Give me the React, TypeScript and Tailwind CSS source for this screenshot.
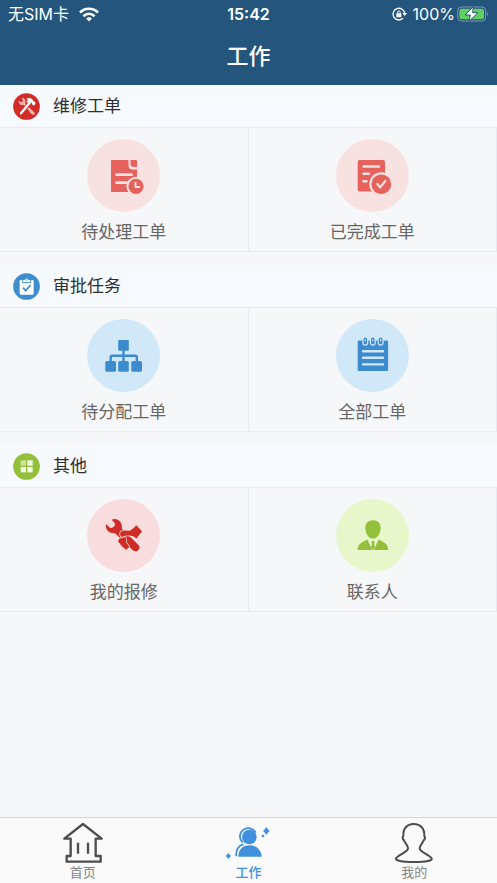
import type { ReactNode } from 'react';

interface Entry {
    label: string;
    circle: string;
    icon: ReactNode;
}

interface Section {
    title: string;
    badge: ReactNode;
    entries: Entry[];
}

function RepairBadge() {
    return (
        <svg viewBox="0 0 81 81" className="size-[27px]" aria-hidden="true">
            <circle cx="40.5" cy="40.5" r="40" fill="#d12c27" />
            <path d="M30 29 L58 59" stroke="#f3b5b3" strokeWidth="7" />
            <path d="M51 54 l5 -4 l9 9 l-1 6 l-6 0 l-8 -8 z" fill="#f3b5b3" />
            <path d="M17 23 l8 5 l5 -5 l-4 -8 c7 -1 13 4 11 13 l-7 8 c-8 2 -14 -5 -13 -13 z" fill="#f3b5b3" />
            <path d="M52 27 L24 63" stroke="#d12c27" strokeWidth="12" />
            <path d="M52 27 L24 61" stroke="#fff" strokeWidth="7" strokeLinecap="round" />
            <path d="M40 17 c8 -4 15 -2 20 4 l3 5 l4 1 l0 6 l-5 5 l-6 -5 l1 -4 l-5 -5 l-5 7 l-7 -5 l5 -6 z" fill="#fff" />
        </svg>
    );
}

function ApprovalBadge() {
    return (
        <svg viewBox="0 0 81 81" className="size-[27px]" aria-hidden="true">
            <circle cx="40.5" cy="40.5" r="40" fill="#3e8dce" />
            <rect x="20" y="21" width="42" height="44" rx="4" fill="#fff" />
            <path d="M29 20 v9 h24 v-9" fill="none" stroke="#3e8dce" strokeWidth="3" />
            <path d="M31 26 v-5 h5 c1 -6 9 -6 10 0 h5 v5 z" fill="#fff" />
            <circle cx="41" cy="21" r="2" fill="#3e8dce" />
            <path d="M30 44 L38 53 L53 36" fill="none" stroke="#3e8dce" strokeWidth="5" />
        </svg>
    );
}

function OtherBadge() {
    return (
        <svg viewBox="0 0 81 81" className="size-[27px]" aria-hidden="true">
            <circle cx="40.5" cy="40.5" r="40" fill="#93bf3a" />
            <rect x="23" y="22" width="16" height="16" fill="#cfe39f" />
            <rect x="43" y="22" width="16" height="16" fill="#f4faea" />
            <rect x="23" y="42" width="16" height="16" fill="#f4faea" />
            <rect x="43" y="42" width="16" height="16" fill="#f4faea" />
        </svg>
    );
}

function PendingIcon() {
    return (
        <svg viewBox="0 0 73 73" className="size-full" aria-hidden="true">
            <path d="M25 21 H41.5 V26 Q41.5 30.5 46 30.5 H50 V53 H25 Q24 53 24 52 V22 Q24 21 25 21 Z" fill="#e5625d" />
            <path d="M43.5 21 H49 Q50 21 50 22 V28 H47 Q43.5 28 43.5 24.5 Z" fill="#e5625d" />
            <path d="M29.5 35.7 H44.5 M29.5 43.7 H40" stroke="#f8e1e1" strokeWidth="2.8" strokeLinecap="round" />
            <circle cx="49" cy="47.3" r="9.6" fill="#f8e1e1" />
            <circle cx="49" cy="47.3" r="7.6" fill="#e5625d" />
            <path d="M48.5 43 V48 H53" fill="none" stroke="#f8e1e1" strokeWidth="1.9" />
        </svg>
    );
}

function DoneIcon() {
    return (
        <svg viewBox="0 0 73 73" className="size-full" aria-hidden="true">
            <rect x="21.7" y="21" width="27.3" height="31.5" rx="2" fill="#e5625d" />
            <path d="M27.5 27.5 H43 M27.5 34.8 H33 M27.5 42.3 H30.5" stroke="#f8e1e1" strokeWidth="2.4" strokeLinecap="round" />
            <circle cx="45.3" cy="45.3" r="12" fill="#f8e1e1" />
            <circle cx="45.3" cy="45.3" r="9.9" fill="#e5625d" />
            <path d="M41.3 45 L44.2 48.3 L49.3 42" fill="none" stroke="#f8e1e1" strokeWidth="2.2" strokeLinecap="round" strokeLinejoin="round" />
        </svg>
    );
}

function AssignIcon() {
    return (
        <svg viewBox="0 0 73 73" className="size-full" aria-hidden="true">
            <path d="M36.5 30 V43 M23.7 43 V38 Q23.7 36.7 25 36.7 H48.5 Q49.8 36.7 49.8 38 V43" fill="none" stroke="#3d8bcf" strokeWidth="2.4" />
            <g fill="#3d8bcf">
                <rect x="31.2" y="21" width="10.6" height="10.7" rx="1" />
                <rect x="18.3" y="42" width="10.7" height="10.7" rx="1.5" />
                <rect x="31.2" y="42" width="10.6" height="10.7" rx="1.5" />
                <rect x="44.3" y="42" width="10.7" height="10.7" rx="1.5" />
            </g>
        </svg>
    );
}

function AllIcon() {
    return (
        <svg viewBox="0 0 73 73" className="size-full" aria-hidden="true">
            <rect x="21.7" y="21.6" width="30.4" height="30.5" rx="1" fill="#3d8bcf" />
            {[29.3, 36.8, 44.6].map((x) => (
                <g key={x}>
                    <rect x={x - 3} y="17.6" width="6" height="9.2" rx="3" fill="#d0e8f8" />
                    <rect x={x - 1.8} y="18.6" width="3.6" height="7" rx="1.8" fill="#3d8bcf" />
                    <rect x={x - 0.6} y="20" width="1.2" height="2.6" rx="0.6" fill="#d0e8f8" />
                </g>
            ))}
            <path d="M27 32.3 H47 M27 38.8 H47 M27 45.4 H47" stroke="#d0e8f8" strokeWidth="2.4" strokeLinecap="round" />
        </svg>
    );
}

function MyRepairIcon() {
    return (
        <svg viewBox="0 0 73 73" className="size-full" aria-hidden="true">
            <path d="M24.5 20.8 C30 18 36 23 34.8 29.6 L52 46.5 Q53.4 50 50.6 51.8 Q47.8 53.2 45.3 50.8 L28 34.2 C22 34.8 17.8 30.5 19 25 L22.3 28.2 Q24.6 29.8 26.8 27.8 Q28.8 25.6 27.4 23.6 Z" fill="#d02c26" />
            <path d="M33 35 Q33.5 31.6 37 31.6 L43 31.8 Q45 30 46.5 29.3 L49.3 26.3 L55 32.2 L49.6 39.4 Q46.5 36.6 42.5 36.6 Q38.5 36 36.5 37.6 Q33.5 39 33 35 Z" fill="#d02c26" stroke="#f9dcde" strokeWidth="1.6" paintOrder="stroke" />
            <path d="M32.4 39.4 Q35 39.8 37.3 38 Q40.4 39.8 39 43.4 L42 47 Q42.4 48.8 40.6 49.2 Q40 51 38.2 50.2 L37 48.8 Q35.2 49 35 46.8 Q33 46.6 33.2 44.6 Q30.6 43.8 31.4 41.6 Z" fill="#d02c26" stroke="#f9dcde" strokeWidth="1.4" paintOrder="stroke" />
        </svg>
    );
}

function ContactIcon() {
    return (
        <svg viewBox="0 0 73 73" className="size-full" aria-hidden="true">
            <g fill="#93bf3a">
                <path d="M37 21.3 C42.5 21.3 45.2 24.8 44.6 30 C44 35.5 41 39.7 37 39.7 C33 39.7 30 35.5 29.4 30 C28.8 24.8 31.5 21.3 37 21.3 Z" />
                <path d="M31.5 40.5 L36 51 H21.7 C21.7 45 25.5 43.5 31.5 40.5 Z" />
                <path d="M42.5 40.5 L38 51 H52.1 C52.1 45 48.5 43.5 42.5 40.5 Z" />
                <path d="M35.3 42 H38.7 L38 44.5 L39 48.5 L37 51 L35 48.5 L36 44.5 Z" />
            </g>
        </svg>
    );
}

const sections: Section[] = [
    {
        title: '维修工单',
        badge: <RepairBadge />,
        entries: [
            { label: '待处理工单', circle: 'bg-[#f8e1e1]', icon: <PendingIcon /> },
            { label: '已完成工单', circle: 'bg-[#f8e1e1]', icon: <DoneIcon /> },
        ],
    },
    {
        title: '审批任务',
        badge: <ApprovalBadge />,
        entries: [
            { label: '待分配工单', circle: 'bg-[#d0e8f8]', icon: <AssignIcon /> },
            { label: '全部工单', circle: 'bg-[#d0e8f8]', icon: <AllIcon /> },
        ],
    },
    {
        title: '其他',
        badge: <OtherBadge />,
        entries: [
            { label: '我的报修', circle: 'bg-[#f9dcde]', icon: <MyRepairIcon /> },
            { label: '联系人', circle: 'bg-[#e8f7cb]', icon: <ContactIcon /> },
        ],
    },
];

function StatusBar() {
    return (
        <div className="grid h-7 grid-cols-3 items-center px-2 text-base leading-7">
            <div className="flex items-center gap-2.5">
                <span>无SIM卡</span>
                <svg viewBox="0 0 60 44" className="h-[15px] w-5" aria-hidden="true">
                    <g fill="none" stroke="#fff" strokeWidth="8">
                        <path d="M3 16 C18 1 42 1 57 16" />
                        <path d="M13 27 C23 18 37 18 47 27" />
                    </g>
                    <path d="M21 34 Q30 27 39 34 L30 43 Z" fill="#fff" />
                </svg>
            </div>
            <span className="text-center font-semibold">15:42</span>
            <div className="flex items-center justify-end">
                <svg viewBox="0 0 45 42" className="mr-1.5 h-[14px] w-[15px]" aria-hidden="true">
                    <path d="M33 34 A17.5 17.5 0 1 1 38 18" fill="none" stroke="#fff" strokeWidth="4" />
                    <path d="M31 18 H45 L38 27 Z" fill="#fff" />
                    <rect x="13" y="19" width="15" height="12" rx="1" fill="#fff" />
                    <path d="M16.5 20 V16 Q16.5 12 20.5 12 Q24.5 12 24.5 16 V20" fill="none" stroke="#fff" strokeWidth="3" />
                </svg>
                <span className="mr-0.5">100%</span>
                <svg viewBox="0 0 96 48" className="h-4 w-8" aria-hidden="true">
                    <rect x="2" y="3" width="84" height="42" rx="11" fill="none" stroke="#7d9bb4" strokeWidth="3" />
                    <rect x="7" y="8" width="74" height="32" rx="7" fill="#62cf62" />
                    <path d="M90 17 Q96 24 90 31 Z" fill="#7d9bb4" />
                    <path d="M49 2 L24 27 H40 L36 46 L63 20 H47 Z" fill="#fff" stroke="#24557d" strokeWidth="3" />
                </svg>
            </div>
        </div>
    );
}

function HomeTabIcon() {
    return (
        <svg viewBox="0 0 120 123" className="h-[41px] w-10" fill="none" stroke="#4d4d4d" strokeWidth="7" strokeLinejoin="round" aria-hidden="true">
            <path d="M60 6 L116 50 H98 V102 H113 V119 H11 V102 H23 V50 H4 Z" />
            <path d="M45 62 V95 M75 62 V95" />
        </svg>
    );
}

function WorkTabIcon() {
    return (
        <svg viewBox="0 0 144 123" className="h-[41px] w-12" fill="#4190de" aria-hidden="true">
            <path d="M56 62 A25 25 0 1 1 95 32" fill="none" stroke="#4190de" strokeWidth="5.5" />
            <circle cx="76" cy="45" r="22" />
            <path d="M36 103 C36 82 46 70 58 67" fill="none" stroke="#4190de" strokeWidth="5" />
            <path d="M43 104 C43 84 55 70 77 70 C98 70 112 84 113 104 Z" />
            <path d="M127 15 Q131 22 137 27 Q131 32 127 39 Q123 32 117 27 Q123 22 127 15 Z" />
            <circle cx="117" cy="42" r="4" />
            <path d="M13 93 Q16 98 21 102 Q16 106 13 111 Q10 106 5 102 Q10 98 13 93 Z" />
        </svg>
    );
}

function MineTabIcon() {
    return (
        <svg viewBox="0 0 120 123" className="h-[41px] w-10" fill="none" stroke="#4d4d4d" strokeWidth="6" aria-hidden="true">
            <path d="M59 6 C38 6 27 20 28 42 C24 46 26 52 30 55 C32 63 42 70 42 79 C41 91 14 97 6 109 C3 116 24 120 60 120 C96 120 117 116 113 109 C105 97 78 91 77 79 C77 70 87 63 89 55 C93 52 95 46 91 42 C92 20 80 6 59 6 Z" />
        </svg>
    );
}

const tabs = [
    { label: '首页', icon: <HomeTabIcon />, active: false },
    { label: '工作', icon: <WorkTabIcon />, active: true },
    { label: '我的', icon: <MineTabIcon />, active: false },
];

export default function App() {
    return (
        <div className="flex min-h-screen flex-col bg-[#f6f7f9] font-[Inter,'Noto_Sans_CJK_SC',sans-serif]">
            <header className="bg-[#24557d] text-white">
                <StatusBar />
                <h1 className="h-[57px] text-center text-[22px] leading-[57px] font-medium">工作</h1>
            </header>

            <main className="flex flex-1 flex-col gap-[13px]">
                {sections.map((section) => (
                    <section key={section.title}>
                        <div className="flex h-[43px] items-center gap-[13px] border-b border-[#e8ebef] bg-[#f6fafe] px-[13px]">
                            {section.badge}
                            <h2 className="text-[17px] leading-6 text-[#2e2e2e]">{section.title}</h2>
                        </div>
                        <div className="grid grid-cols-2">
                            {section.entries.map((entry) => (
                                <button
                                    type="button"
                                    key={entry.label}
                                    className="flex flex-col items-center gap-2 border-r border-b border-[#e8ebef] pt-[11px] pb-[7px]"
                                >
                                    <span className={`size-[73px] rounded-full ${entry.circle}`}>{entry.icon}</span>
                                    <span className="text-[17px] leading-6 text-[#666]">{entry.label}</span>
                                </button>
                            ))}
                        </div>
                    </section>
                ))}
            </main>

            <nav className="grid grid-cols-3 border-t border-[#d3d4d6] bg-[#fafafb] pt-1 pb-0.5">
                {tabs.map((tab) => (
                    <a
                        key={tab.label}
                        href="#"
                        aria-current={tab.active ? 'page' : undefined}
                        className={`flex flex-col items-center text-[13px] leading-[18px] ${tab.active ? 'font-medium text-[#4190de]' : 'text-[#858585]'}`}
                    >
                        {tab.icon}
                        {tab.label}
                    </a>
                ))}
            </nav>
        </div>
    );
}
